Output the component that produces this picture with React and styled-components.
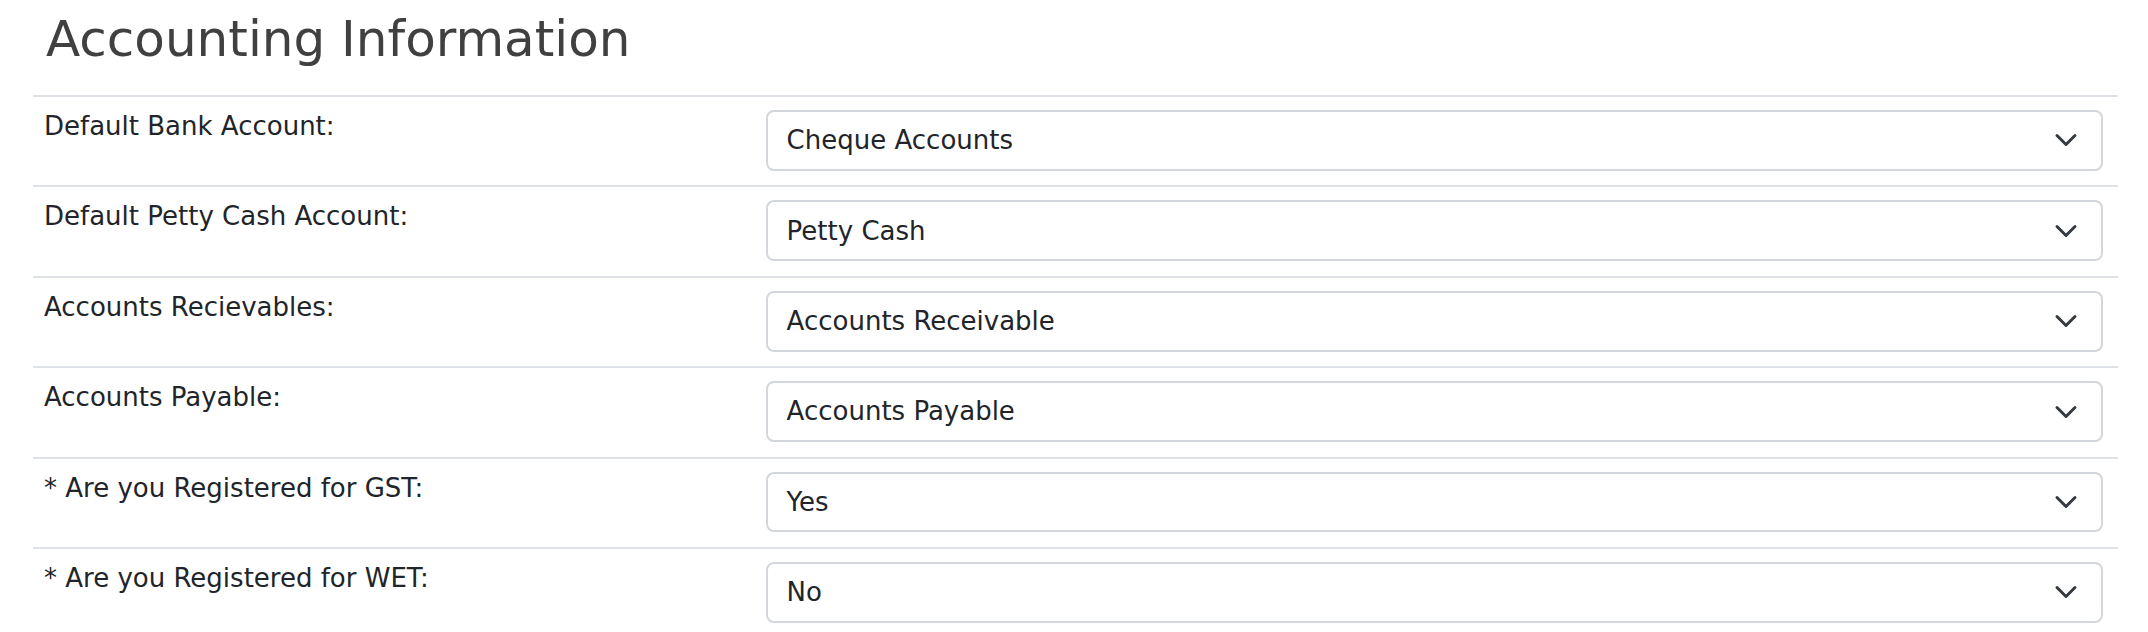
import React from "react";
import styled, { createGlobalStyle } from "styled-components";

const GlobalStyle = createGlobalStyle`
  html, body { margin: 0; padding: 0; background: #ffffff; }
  body { font-family: "DejaVu Sans", "Liberation Sans", sans-serif; }
  * { box-sizing: border-box; }
`;

const Page = styled.div`
  padding: 9px 30px 0 33px;
  width: 2148px;
`;

const Title = styled.h2`
  margin: 0 0 26px;
  padding-left: 13px;
  font-size: 50px;
  line-height: 60px;
  font-weight: 400;
  color: #404040;
`;

const FieldRow = styled.div`
  display: grid;
  grid-template-columns: 718px 1fr;
  border-top: 2px solid #dee2e6;
`;

const FieldLabel = styled.label`
  padding: 10px 11px 0;
  font-size: 26px;
  line-height: 38.4px;
  color: #212529;
`;

const ControlCell = styled.div`
  padding: 13px 15px 14.6px;
`;

const SelectBox = styled.div`
  height: 60.8px;
  display: flex;
  align-items: center;
  justify-content: space-between;
  border: 2px solid #d3d7dc;
  border-radius: 8px;
  padding: 0 23.5px 0 18.6px;
  font-size: 26px;
  line-height: 38.4px;
  color: #212529;
  background: #ffffff;
`;

const Chevron = () => (
  <svg width="24" height="24" viewBox="0 0 16 16" aria-hidden="true">
    <path
      d="m2 5 6 6 6-6"
      fill="none"
      stroke="#343a40"
      strokeWidth="2"
      strokeLinecap="round"
      strokeLinejoin="round"
    />
  </svg>
);

const fields = [
  { label: "Default Bank Account:", value: "Cheque Accounts" },
  { label: "Default Petty Cash Account:", value: "Petty Cash" },
  { label: "Accounts Recievables:", value: "Accounts Receivable" },
  { label: "Accounts Payable:", value: "Accounts Payable" },
  { label: "* Are you Registered for GST:", value: "Yes" },
  { label: "* Are you Registered for WET:", value: "No" },
];

export default function App() {
  return (
    <>
      <GlobalStyle />
      <Page>
        <Title>Accounting Information</Title>
        {fields.map((f) => (
          <FieldRow key={f.label}>
            <FieldLabel>{f.label}</FieldLabel>
            <ControlCell>
              <SelectBox>
                <span>{f.value}</span>
                <Chevron />
              </SelectBox>
            </ControlCell>
          </FieldRow>
        ))}
      </Page>
    </>
  );
}
